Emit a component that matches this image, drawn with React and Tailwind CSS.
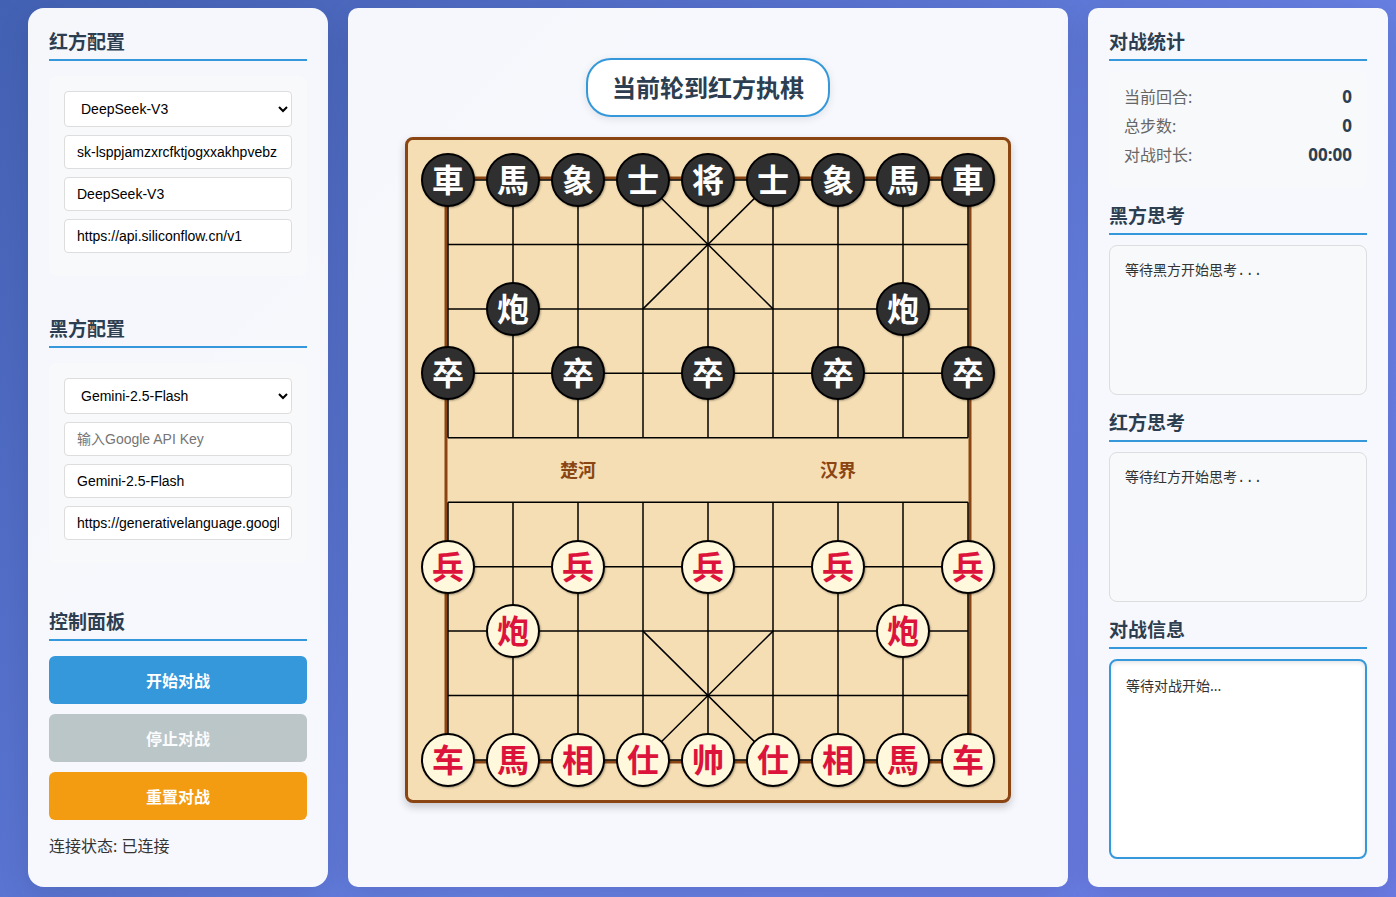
import React from "react";

const CELL_W = 65;
const BOARD_LEFT = 40;
const BOARD_TOP = 40;
const BOARD_H = 580;

const rankY = (rank) => BOARD_TOP + (rank * BOARD_H) / 9;
const fileX = (file) => BOARD_LEFT + file * CELL_W;

// Upper case marks black, lower case marks red; dots are empty points.
const LAYOUT = [
  "RNBAKABNR",
  ".........",
  ".C.....C.",
  "P.P.P.P.P",
  ".........",
  ".........",
  "p.p.p.p.p",
  ".c.....c.",
  ".........",
  "rnbakabnr",
];

const NAMES = {
  R: "車", N: "馬", B: "象", A: "士", K: "将", C: "炮", P: "卒",
  r: "车", n: "馬", b: "相", a: "仕", k: "帅", c: "炮", p: "兵",
};

const FIELD =
  "block w-full rounded border border-[#dddddd] bg-white px-3 font-['Liberation_Sans','Noto_Sans_CJK_SC',sans-serif] text-sm text-black placeholder:text-[#757575]";

function Heading({ children }) {
  return (
    <h3 className="border-b-2 border-[#3498db] pb-[3px] text-[19px] leading-[27px] font-bold text-[#2c3e50]">
      {children}
    </h3>
  );
}

function ConfigSection({ title, models, apiKey, keyHint, model, url }) {
  return (
    <section>
      <Heading>{title}</Heading>
      <div className="mt-[15px] flex flex-col gap-2 rounded-lg bg-[#f8f9fa] px-[15px] pt-[15px] pb-[23px]">
        <select aria-label={title + "模型"} className={FIELD + " h-9"} defaultValue={models[0]}>
          {models.map((m) => (
            <option key={m}>{m}</option>
          ))}
        </select>
        <input aria-label={title + "密钥"} className={FIELD + " h-[34px]"} defaultValue={apiKey} placeholder={keyHint} />
        <input aria-label={title + "模型名称"} className={FIELD + " h-[34px]"} defaultValue={model} />
        <input aria-label={title + "接口地址"} className={FIELD + " h-[34px]"} defaultValue={url} />
      </div>
    </section>
  );
}

function BoardLines() {
  const ranks = [0, 1, 2, 3, 4, 5, 6, 7, 8, 9];
  const files = [0, 1, 2, 3, 4, 5, 6, 7, 8];
  const palaces = [0, 7];
  return (
    <svg className="absolute inset-0 h-full w-full" viewBox="0 0 600 660" aria-hidden="true">
      <rect x="38" y="38" width="524" height="584" fill="none" stroke="#8b4513" strokeWidth="3" />
      <g stroke="#000" strokeWidth="1.5">
        {ranks.map((r) => (
          <line key={"r" + r} x1={fileX(0)} y1={rankY(r)} x2={fileX(8)} y2={rankY(r)} />
        ))}
        {files.map((f) => (
          <g key={"f" + f}>
            <line x1={fileX(f)} y1={rankY(0)} x2={fileX(f)} y2={rankY(4)} />
            <line x1={fileX(f)} y1={rankY(5)} x2={fileX(f)} y2={rankY(9)} />
          </g>
        ))}
        {palaces.map((r) => (
          <g key={"p" + r}>
            <line x1={fileX(3)} y1={rankY(r)} x2={fileX(5)} y2={rankY(r + 2)} />
            <line x1={fileX(5)} y1={rankY(r)} x2={fileX(3)} y2={rankY(r + 2)} />
          </g>
        ))}
      </g>
    </svg>
  );
}

function Piece({ code }) {
  if (code === ".") return <span />;
  const black = code === code.toUpperCase();
  return (
    <button
      type="button"
      className={
        "flex size-[54px] items-center justify-center rounded-full border-2 border-black text-[32px] leading-none font-bold shadow-[1px_1px_2px_rgba(0,0,0,0.3)] " +
        (black ? "bg-[#2f2f2f] text-white" : "bg-[#fff8dc] text-[#dc143c]")
      }
    >
      {NAMES[code]}
    </button>
  );
}

function Board() {
  return (
    <div className="relative mt-5 h-[666px] w-[606px] rounded-lg border-[3px] border-[#8b4513] bg-[#f5deb3] shadow-[0_4px_8px_rgba(0,0,0,0.2)]">
      <BoardLines />
      <div className="absolute inset-x-10 inset-y-0 grid grid-cols-2 place-items-center text-lg font-bold text-[#8b4513]">
        <span>楚河</span>
        <span>汉界</span>
      </div>
      <div className="relative grid h-full grid-cols-[repeat(9,65px)] content-center justify-center">
        {LAYOUT.map((row, r) => (
          <div key={r} className="col-span-9 grid h-16 grid-cols-subgrid place-items-center even:h-[65px]">
            {row.split("").map((c, i) => (
              <Piece key={i} code={c} />
            ))}
          </div>
        ))}
      </div>
    </div>
  );
}

function Stat({ label, value }) {
  return (
    <div className="flex justify-between leading-6">
      <dt className="text-base leading-6 text-[#666666]">{label}</dt>
      <dd className="font-['Open_Sans','Noto_Sans_CJK_SC',sans-serif] text-[17px] leading-6 font-bold text-[#2c3e50]">{value}</dd>
    </div>
  );
}

function Thinking({ title, text }) {
  return (
    <section className="mt-[15px]">
      <Heading>{title}</Heading>
      <div className="mt-2.5 h-[150px] overflow-y-auto rounded-lg border border-[#dddddd] bg-[#f8f9fa] p-[15px] font-['Liberation_Mono','Noto_Sans_CJK_SC',monospace] text-sm leading-5 text-[#333333]">
        {text}
      </div>
    </section>
  );
}

const PANEL = "bg-white/95 shadow-[0_8px_32px_rgba(0,0,0,0.1)]";
const ACTION = "h-12 rounded-md pt-0.5 text-base font-bold text-white";

export default function App() {
  return (
    <div className="flex min-h-screen gap-5 bg-linear-135 from-[#4361b3] via-[#667fe2] via-60% to-[#6b7be4] pt-2 pr-2 pb-2.5 pl-7 font-['Noto_Sans','Noto_Sans_CJK_SC',sans-serif] text-[#333333]">
      <aside className={PANEL + " flex w-[300px] shrink-0 flex-col rounded-2xl p-[21px]"}>
        <ConfigSection
          title="红方配置"
          models={["DeepSeek-V3", "Gemini-2.5-Flash"]}
          apiKey="sk-lsppjamzxrcfktjogxxakhpvebz"
          model="DeepSeek-V3"
          url="https://api.siliconflow.cn/v1"
        />
        <div className="mt-10">
          <ConfigSection
            title="黑方配置"
            models={["Gemini-2.5-Flash", "DeepSeek-V3"]}
            keyHint="输入Google API Key"
            model="Gemini-2.5-Flash"
            url="https://generativelanguage.googleapis.com/v1beta"
          />
        </div>
        <section className="mt-[46px]">
          <Heading>控制面板</Heading>
          <div className="mt-[15px] flex flex-col gap-2.5">
            <button type="button" className={ACTION + " bg-[#3498db]"}>开始对战</button>
            <button type="button" disabled className={ACTION + " bg-[#95a5a6] opacity-60"}>停止对战</button>
            <button type="button" className={ACTION + " bg-[#f39c12]"}>重置对战</button>
          </div>
          <p className="mt-3.5 text-base leading-6">连接状态: 已连接</p>
        </section>
      </aside>

      <main className={PANEL + " flex min-w-0 flex-1 flex-col items-center rounded-[10px] pt-[50px]"}>
        <h1 className="rounded-[25px] border-2 border-[#3498db] bg-white px-6 py-3 text-2xl leading-[31px] font-bold text-[#2c3e50] shadow-[0_2px_8px_rgba(0,0,0,0.1)]">
          当前轮到红方执棋
        </h1>
        <Board />
      </main>

      <aside className={PANEL + " w-[300px] shrink-0 rounded-[10px] p-[21px]"}>
        <section>
          <Heading>对战统计</Heading>
          <dl className="mt-2.5 flex flex-col gap-[5px] rounded-lg bg-[#f8f9fa] px-[15px] pt-3.5 pb-[21px]">
            <Stat label="当前回合:" value="0" />
            <Stat label="总步数:" value="0" />
            <Stat label="对战时长:" value="00:00" />
          </dl>
        </section>
        <Thinking title="黑方思考" text="等待黑方开始思考..." />
        <Thinking title="红方思考" text="等待红方开始思考..." />
        <section className="mt-[15px]">
          <Heading>对战信息</Heading>
          <div className="mt-2.5 h-[200px] overflow-y-auto rounded-lg border-2 border-[#3498db] bg-white p-[15px] text-sm leading-5 shadow-[inset_0_2px_4px_rgba(0,0,0,0.1)]">
            等待对战开始...
          </div>
        </section>
      </aside>
    </div>
  );
}
